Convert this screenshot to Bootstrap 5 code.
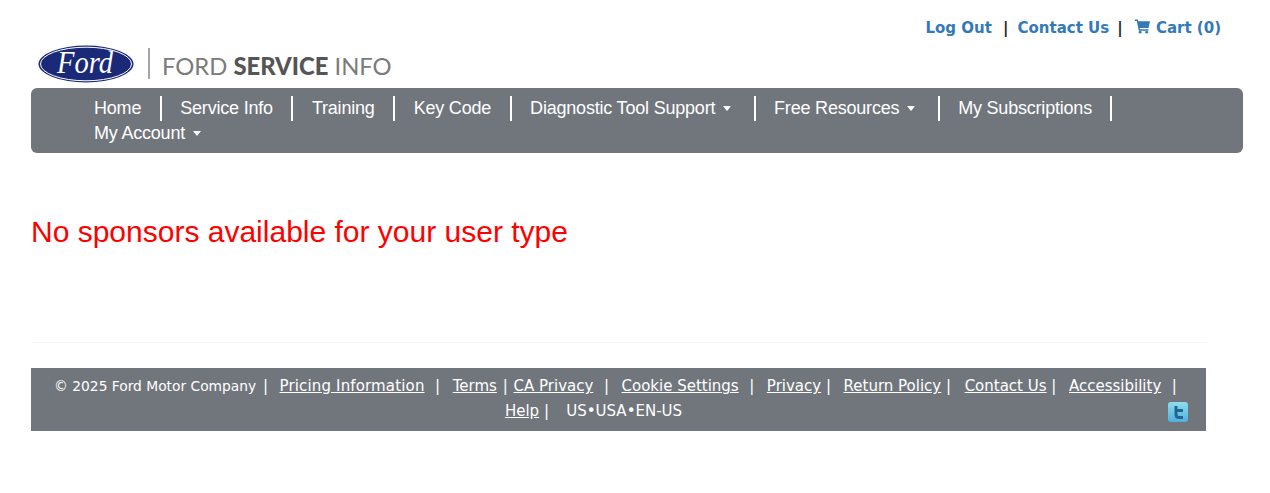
<!DOCTYPE html>
<html lang="en">
<head>
  <meta charset="UTF-8" />
  <meta name="viewport" content="width=device-width, initial-scale=1.0"/>
  <title>Ford Service Info</title>
  <link href="https://cdn.jsdelivr.net/npm/bootstrap@5.3.0/dist/css/bootstrap.min.css" rel="stylesheet" />
  <style>
    body {
      background: #fff;
      font-family: "Liberation Sans", Arial, sans-serif;
    }

    .page-wrap {
      padding: 0 27px 0 31px;
    }

    /* top links */
    .top-links {
      font-family: "DejaVu Sans", Verdana, sans-serif;
      font-weight: 700;
      font-size: 15px;
      line-height: 20px;
      padding: 18px 22px 0 0;
      color: #222;
    }
    .top-links a {
      color: #337ab7;
      text-decoration: none;
    }
    .top-links .sep-a {
      margin: 0 9px 0 6px;
    }
    .top-links .sep-b {
      margin: 0 12px 0 8px;
    }
    .cart-icon {
      width: 15px;
      height: 15px;
      margin-right: 1px;
      vertical-align: -1px;
    }

    /* logo */
    .logo-row {
      height: 41px;
      padding-left: 7px;
      margin: 5px 0 4px;
    }
    .logo-oval {
      width: 96px;
      height: 38px;
    }
    .logo-bar {
      width: 2px;
      height: 31px;
      background: #a5a5a5;
      margin: 0 12px 0 14px;
    }
    .logo-words {
      font-family: "Lato", sans-serif;
      font-size: 23.8px;
      line-height: 1;
      padding-top: 6px;
      color: #7b7b7b;
      white-space: nowrap;
    }
    .logo-words b {
      color: #555;
      font-weight: 900;
    }

    /* main nav */
    .main-menu {
      background: #71767c;
      border-radius: 6px;
      padding: 8px 0 7px 44.5px;
      font-size: 18px;
      letter-spacing: -0.2px;
    }
    .main-menu .nav-item {
      border-right: 2px solid #fff;
      height: 25px;
    }
    .main-menu .nav-item:last-child {
      border-right: 0;
    }
    .main-menu .nav-link {
      color: #fff;
      padding: 0 18.5px;
      line-height: 25px;
    }
    .main-menu .dropdown-toggle::after {
      border-width: 5px 4px 0;
      margin: 0 3.8px 0 8px;
      vertical-align: 3px;
    }

    .no-sponsors {
      color: #f00;
      font-size: 30px;
      font-weight: 400;
      line-height: 36px;
      margin: 61px 0 0;
    }

    .foot-rule {
      width: 1175px;
      margin: 92px 0 25px;
      border-color: #ddd;
    }

    /* footer */
    .site-foot {
      width: 1175px;
      height: 63px;
      background: #71767c;
      color: #fff;
      font-family: "DejaVu Sans", Tahoma, sans-serif;
      font-size: 15px;
      line-height: 25px;
      padding: 6px 18px 0 18px;
      text-align: center;
    }
    .site-foot a {
      color: #fff;
    }
    .site-foot .copy {
      font-size: 13.8px;
    }
    .site-foot .pricing {
      letter-spacing: .15px;
      margin-left: 1px;
    }
    .bar {
      margin-right: 3px;
    }
    .bar-first {
      margin: 0 1px 0 2px;
    }
    .bar-wide {
      margin: 0 3px 0 1px;
    }
    .bar-thin {
      margin: 0 1px;
    }
    .bar-return {
      margin-right: 4px;
    }
    .bar-last {
      margin: 0 6px 0 1px;
    }
    .tw-icon {
      width: 20px;
      height: 20px;
      margin: 3px 0 0 30px;
    }
  </style>
</head>
<body>

<div class="page-wrap">
  <!-- top links -->
  <div class="top-links text-end">
    <a href="#">Log Out</a>
    <span class="sep-a">|</span><a href="#">Contact Us</a><span class="sep-b">|</span><a href="#"><svg class="cart-icon" viewBox="0 0 16 15"><path fill="#337ab7" d="M0 0h3l.7 2H16l-1.6 7H5l.3 1.5h9V12H4L1.9 1.6H0z"/><circle cx="5.5" cy="13.5" r="1.5" fill="#337ab7"/><circle cx="12.5" cy="13.5" r="1.5" fill="#337ab7"/></svg> Cart (0)</a>
  </div>

  <!-- logo -->
  <div class="logo-row d-flex align-items-center">
    <svg class="logo-oval" viewBox="0 0 96 38">
      <ellipse cx="48" cy="19" rx="47.5" ry="18.5" fill="#1b2a78"/>
      <ellipse cx="48" cy="19" rx="45.5" ry="16.8" fill="none" stroke="#fff" stroke-width="1"/>
      <text x="47" y="28" text-anchor="middle" fill="#fff" font-family="Liberation Serif" font-style="italic" font-size="31" textLength="56" lengthAdjust="spacingAndGlyphs">Ford</text>
    </svg>
    <div class="logo-bar"></div>
    <div class="logo-words">FORD <b>SERVICE</b> INFO</div>
  </div>

  <!-- main nav -->
  <ul class="nav main-menu">
    <li class="nav-item"><a class="nav-link" href="#">Home</a></li>
    <li class="nav-item"><a class="nav-link" href="#">Service Info</a></li>
    <li class="nav-item"><a class="nav-link" href="#">Training</a></li>
    <li class="nav-item"><a class="nav-link" href="#">Key Code</a></li>
    <li class="nav-item"><a class="nav-link dropdown-toggle" href="#">Diagnostic Tool Support</a></li>
    <li class="nav-item"><a class="nav-link dropdown-toggle" href="#">Free Resources</a></li>
    <li class="nav-item"><a class="nav-link" href="#">My Subscriptions</a></li>
    <li class="nav-item"><a class="nav-link dropdown-toggle" href="#">My Account</a></li>
  </ul>

  <h1 class="no-sponsors">No sponsors available for your user type</h1>

  <hr class="foot-rule" />

  <!-- footer -->
  <footer class="site-foot">
    <span class="copy">© 2025 Ford Motor Company</span> <span class="bar-first">|</span>&nbsp;
    <a class="pricing" href="#">Pricing Information</a> &nbsp;<span class="bar-wide">|</span>&nbsp;
    <a href="#">Terms</a> <span class="bar-thin">|</span> <a href="#">CA Privacy</a> &nbsp;<span class="bar-wide">|</span>&nbsp;
    <a href="#">Cookie Settings</a> &nbsp;<span class="bar-wide">|</span>&nbsp;
    <a href="#">Privacy</a> <span class="bar">|</span>&nbsp;
    <a href="#">Return Policy</a> <span class="bar-return">|</span>&nbsp;
    <a href="#">Contact Us</a> <span class="bar">|</span>&nbsp;
    <a href="#">Accessibility</a> &nbsp;<span class="bar-last">|</span><br />
    <a href="#">Help</a> <span class="bar">|</span> &nbsp; US•USA•EN-US
    <svg class="tw-icon float-end" viewBox="0 0 20 20">
      <defs><linearGradient id="twBg" x1="0" y1="0" x2="0" y2="1"><stop offset="0" stop-color="#8fdcef"/><stop offset="1" stop-color="#4fb0dc"/></linearGradient></defs>
      <rect width="20" height="20" rx="3" fill="url(#twBg)"/>
      <path d="M8 4v8.5q0 3 3 3h4M8 8.5h7" fill="none" stroke="#24658f" stroke-width="3"/>
    </svg>
  </footer>
</div>

<script src="https://cdn.jsdelivr.net/npm/bootstrap@5.3.0/dist/js/bootstrap.bundle.min.js"></script>
</body>
</html>
